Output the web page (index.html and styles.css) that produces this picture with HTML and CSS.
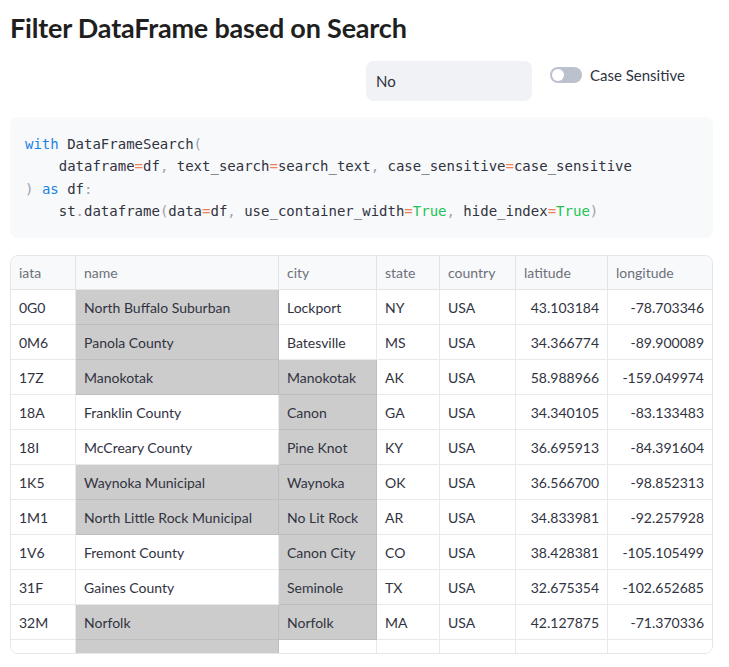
FILE: index.html
```html
<!DOCTYPE html>
<html>
<head>
<meta charset="utf-8">
<link rel="stylesheet" href="styles.css">
</head>
<body>
<main class="page">
  <h1 class="title">Filter DataFrame based on Search</h1>

  <div class="controls">
    <div class="spacer"></div>
    <div class="search"><span class="search-value">No</span></div>
    <label class="toggle">
      <span class="track"><span class="knob"></span></span>
      <span class="toggle-label">Case Sensitive</span>
    </label>
  </div>

  <pre class="code"><code><span class="kw">with</span> DataFrameSearch<span class="p">(</span>
    dataframe<span class="op">=</span>df<span class="p">,</span> text_search<span class="op">=</span>search_text<span class="p">,</span> case_sensitive<span class="op">=</span>case_sensitive
<span class="p">)</span> <span class="kw">as</span> df<span class="p">:</span>
    st<span class="p">.</span>dataframe<span class="p">(</span>data<span class="op">=</span>df<span class="p">,</span> use_container_width<span class="op">=</span><span class="bool">True</span><span class="p">,</span> hide_index<span class="op">=</span><span class="bool">True</span><span class="p">)</span></code></pre>

  <div class="grid-wrap">
    <div class="grid">
      <div class="hd">iata</div><div class="hd">name</div><div class="hd">city</div><div class="hd">state</div><div class="hd">country</div><div class="hd">latitude</div><div class="hd last">longitude</div>

      <div class="c">0G0</div><div class="c hl">North Buffalo Suburban</div><div class="c">Lockport</div><div class="c">NY</div><div class="c">USA</div><div class="c num">43.103184</div><div class="c num last">-78.703346</div>

      <div class="c">0M6</div><div class="c hl">Panola County</div><div class="c">Batesville</div><div class="c">MS</div><div class="c">USA</div><div class="c num">34.366774</div><div class="c num last">-89.900089</div>

      <div class="c">17Z</div><div class="c hl">Manokotak</div><div class="c hl">Manokotak</div><div class="c">AK</div><div class="c">USA</div><div class="c num">58.988966</div><div class="c num last">-159.049974</div>

      <div class="c">18A</div><div class="c">Franklin County</div><div class="c hl">Canon</div><div class="c">GA</div><div class="c">USA</div><div class="c num">34.340105</div><div class="c num last">-83.133483</div>

      <div class="c">18I</div><div class="c">McCreary County</div><div class="c hl">Pine Knot</div><div class="c">KY</div><div class="c">USA</div><div class="c num">36.695913</div><div class="c num last">-84.391604</div>

      <div class="c">1K5</div><div class="c hl">Waynoka Municipal</div><div class="c hl">Waynoka</div><div class="c">OK</div><div class="c">USA</div><div class="c num">36.566700</div><div class="c num last">-98.852313</div>

      <div class="c">1M1</div><div class="c hl">North Little Rock Municipal</div><div class="c hl">No Lit Rock</div><div class="c">AR</div><div class="c">USA</div><div class="c num">34.833981</div><div class="c num last">-92.257928</div>

      <div class="c">1V6</div><div class="c">Fremont County</div><div class="c hl">Canon City</div><div class="c">CO</div><div class="c">USA</div><div class="c num">38.428381</div><div class="c num last">-105.105499</div>

      <div class="c">31F</div><div class="c">Gaines County</div><div class="c hl">Seminole</div><div class="c">TX</div><div class="c">USA</div><div class="c num">32.675354</div><div class="c num last">-102.652685</div>

      <div class="c">32M</div><div class="c hl">Norfolk</div><div class="c hl">Norfolk</div><div class="c">MA</div><div class="c">USA</div><div class="c num">42.127875</div><div class="c num last">-71.370336</div>

      <div class="c">33N</div><div class="c hl">North Sioux</div><div class="c">Delmar</div><div class="c">DE</div><div class="c">USA</div><div class="c num">38.457584</div><div class="c num last">-75.657213</div>
    </div>
  </div>
</main>
</body>
</html>
```

FILE: styles.css
```css
* { box-sizing: border-box; }

html, body {
  margin: 0;
  padding: 0;
  background: #ffffff;
}

body {
  font-family: "Lato", "Noto Sans", sans-serif;
  color: #31333f;
}

.page {
  width: 713px;
  padding: 0 0 0 10px;
}

.title {
  margin: 0;
  padding: 8px 0 0 0;
  height: 61px;
  font-size: 27px;
  font-weight: 700;
  line-height: 40px;
  color: #1f1f1f;
  letter-spacing: -0.2px;
}

.controls {
  display: grid;
  grid-template-columns: 340px 166px 165px;
  column-gap: 16px;
  align-items: start;
}

.search {
  height: 40px;
  background: #f0f2f6;
  border-radius: 8px;
  display: flex;
  align-items: center;
  padding-left: 10px;
  font-size: 15px;
  color: #31333f;
}

.toggle {
  display: flex;
  align-items: center;
  gap: 8px;
  padding: 2px 0 0 2px;
  height: 26px;
  font-size: 15px;
  color: #31333f;
}

.track {
  width: 32px;
  height: 16px;
  border-radius: 8px;
  background: #bcc1ce;
  display: flex;
  align-items: center;
  padding-left: 2px;
}

.knob {
  width: 12px;
  height: 12px;
  border-radius: 50%;
  background: #ffffff;
}

.code {
  margin: 16px 0 0 0;
  background: #f8f9fb;
  border-radius: 8px;
  padding: 16px 15px;
  font-family: "DejaVu Sans Mono", "Liberation Mono", monospace;
  font-size: 14px;
  line-height: 22.4px;
  color: #31333f;
  height: 121px;
  overflow: hidden;
}

.code code { font-family: inherit; }

.kw { color: #1c83e1; }
.op { color: #f0805a; }
.bool { color: #21c354; }
.p { color: #9ba1ae; }

.grid-wrap {
  margin-top: 17px;
  width: 703px;
  height: 399px;
  border: 1px solid #e4e6eb;
  border-radius: 8px;
  overflow: hidden;
}

.grid {
  display: grid;
  grid-template-columns: 65px 203px 98px 63px 76px 92px 104px;
  grid-template-rows: 34px;
  grid-auto-rows: 35px;
  font-size: 14px;
}

.hd, .c {
  display: flex;
  align-items: center;
  padding: 0 8px;
  border-right: 1px solid rgba(115, 116, 131, 0.16);
  border-bottom: 1px solid rgba(115, 116, 131, 0.16);
  white-space: nowrap;
  overflow: hidden;
}

.hd {
  background: #f8f9fb;
  color: #6d707a;
}

.c { color: #31333f; background: #ffffff; }

.c.hl { background: #cccccc; }

.num { justify-content: flex-end; }

.last { border-right: none; }
```
